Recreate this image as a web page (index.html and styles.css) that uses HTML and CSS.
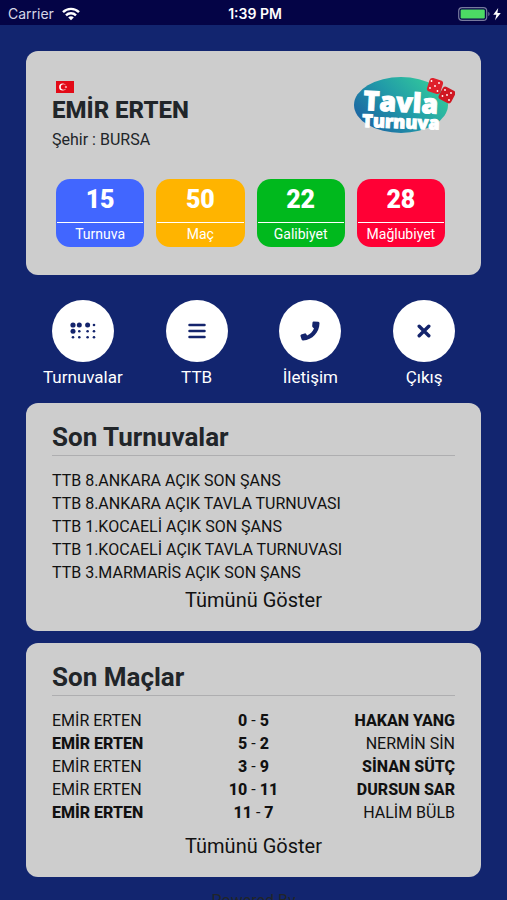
FILE: index.html
```html
<!DOCTYPE html>
<html lang="tr">
<head>
<meta charset="utf-8">
<meta name="viewport" content="width=device-width, initial-scale=1">
<title>Tavla Turnuva</title>
<link rel="stylesheet" href="styles.css">
</head>
<body>
<div class="app">
  <header class="status">
    <div class="status-left">
      <span>Carrier</span>
      <svg width="18" height="14" viewBox="0 0 18 14" fill="none" stroke="#fff" stroke-width="2.4" aria-hidden="true">
        <path d="M1 5.2C5.4 .7 12.6 .7 17 5.2"/>
        <path d="M4 8.3c2.8-2.8 7.2-2.8 10 0"/>
        <path d="M9 13.2 6.2 10.4c1.6-1.4 4-1.4 5.6 0z" fill="#fff" stroke="none"/>
      </svg>
    </div>
    <span class="status-time">1:39 PM</span>
    <div class="status-right">
      <svg width="44" height="14" viewBox="0 0 44 14" aria-hidden="true">
        <rect x=".7" y=".7" width="28" height="12.6" rx="3.4" fill="none" stroke="#777a9e" stroke-width="1.2"/>
        <rect x="2.6" y="2.6" width="24.200" height="8.8" rx="1.2" fill="#4cd964"/>
        <path d="M30.3 4.8c1.7.8 1.7 3.6 0 4.4z" fill="#777a9e"/>
        <path d="M40.2 1 35.2 7.8h3.2l-1.400 5.400 5.800-7.200h-3.400z" fill="#fff"/>
      </svg>
    </div>
  </header>

  <main class="content">
    <section class="card profile">
      <div class="profile-top">
        <div>
          <svg class="flag" width="18" height="12" viewBox="0 0 18 12" role="img" aria-label="Türkiye">
            <rect width="18" height="12" fill="#e30a17"/>
            <circle cx="6.6" cy="6" r="3.5" fill="#fff"/>
            <circle cx="7.6" cy="6" r="2.8" fill="#e30a17"/>
            <path d="m8.5 6 2.6-.9-1.6 2.2V4.700l1.600 2.200z" fill="#fff"/>
          </svg>
          <h1 class="name">EMİR ERTEN</h1>
          <p class="city">Şehir : BURSA</p>
        </div>
        <svg class="logo" width="104" height="60" viewBox="0 0 104 60" role="img" aria-label="Tavla Turnuva">
          <defs>
            <linearGradient id="oval" x1="0" y1=".8" x2="1" y2=".2">
              <stop offset="0" stop-color="#1b5fa2"/>
              <stop offset=".5" stop-color="#219ba8"/>
              <stop offset="1" stop-color="#35cf9a"/>
            </linearGradient>
          </defs>
          <ellipse cx="50" cy="29" rx="47" ry="28" fill="url(#oval)"/>
          <text class="logo-main" x="12" y="34" font-size="27" transform="rotate(3 12 34)">Tavla</text>
          <text class="logo-main" x="11" y="51" font-size="18" transform="rotate(2 11 51)">Turnuva</text>
          <g fill="#df202b">
            <rect x="77" y="3" width="14" height="14" rx="3" transform="rotate(18 84 10)"/>
            <rect x="89" y="12" width="14" height="14" rx="3" transform="rotate(28 96 19)" fill="#cf1722"/>
          </g>
          <g fill="#fff">
            <circle cx="80.500" cy="5" r=".9"/><circle cx="88" cy="7" r=".9"/><circle cx="84" cy="10" r=".9"/>
            <circle cx="79" cy="12" r=".9"/><circle cx="86.500" cy="15" r=".9"/>
            <circle cx="94" cy="14" r=".9"/><circle cx="100" cy="17" r=".9"/><circle cx="96" cy="19" r=".9"/>
            <circle cx="91.500" cy="20" r=".9"/><circle cx="98" cy="24" r=".9"/>
          </g>
        </svg>
      </div>
      <dl class="stats">
        <div class="stat stat-blue"><dt>Turnuva</dt><dd>15</dd></div>
        <div class="stat stat-amber"><dt>Maç</dt><dd>50</dd></div>
        <div class="stat stat-green"><dt>Galibiyet</dt><dd>22</dd></div>
        <div class="stat stat-red"><dt>Mağlubiyet</dt><dd>28</dd></div>
      </dl>
    </section>

    <nav class="menu">
      <a class="menu-item" href="#turnuvalar">
        <span class="menu-icon">
          <svg width="26" height="18" viewBox="0 0 26 18" fill="#14246c" aria-hidden="true">
            <circle cx="3" cy="3" r="2.600"/><circle cx="9.300" cy="3" r="2.500"/><circle cx="17.600" cy="3" r="2.500"/><circle cx="24" cy="3" r="1.300"/>
            <circle cx="3" cy="9.200" r="2.500"/><circle cx="9.300" cy="9.200" r="1.300"/><circle cx="17.600" cy="9.200" r="1.300"/><circle cx="24" cy="9.200" r="1.300"/>
            <circle cx="3" cy="15.300" r="1.300"/><circle cx="9.300" cy="15.300" r="1.300"/><circle cx="17.600" cy="15.300" r="1.300"/><circle cx="24" cy="15.300" r="1.300"/>
          </svg>
        </span>
        Turnuvalar
      </a>
      <a class="menu-item" href="#ttb">
        <span class="menu-icon">
          <svg width="18" height="16" viewBox="0 0 18 16" stroke="#14246c" stroke-width="2.500" stroke-linecap="round" aria-hidden="true">
            <path d="M1.500 2h15M1.500 8h15M1.500 14h15"/>
          </svg>
        </span>
        TTB
      </a>
      <a class="menu-item" href="#iletisim">
        <span class="menu-icon">
          <svg width="20" height="20" viewBox="0 0 20 20" fill="#14246c" aria-hidden="true">
            <path d="M13.600 .6 18.300 .8Q19.500 .9 19.500 2.200C19.400 11.400 12.400 18.800 3.200 19.400Q2 19.500 1.600 18.400L.5 15.100Q.2 14.100 1.200 13.600L4.600 12.400Q5.600 12.100 6.200 13L7.100 14.400C10.200 12.900 12.600 10.600 14 7.400L12.700 6.300Q12 5.700 12.200 4.800L12.500 1.500Q12.700 .6 13.600 .6z"/>
          </svg>
        </span>
        İletişim
      </a>
      <a class="menu-item" href="#cikis">
        <span class="menu-icon">
          <svg width="14" height="14" viewBox="0 0 14 14" stroke="#14246c" stroke-width="3.400" stroke-linecap="round" aria-hidden="true">
            <path d="M2.200 2.200l9.600 9.600M11.800 2.200l-9.600 9.600"/>
          </svg>
        </span>
        Çıkış
      </a>
    </nav>

    <section class="card panel">
      <h2 class="panel-title">Son Turnuvalar</h2>
      <ul class="events">
        <li>TTB 8.ANKARA AÇIK SON ŞANS</li>
        <li>TTB 8.ANKARA AÇIK TAVLA TURNUVASI</li>
        <li>TTB 1.KOCAELİ AÇIK SON ŞANS</li>
        <li>TTB 1.KOCAELİ AÇIK TAVLA TURNUVASI</li>
        <li>TTB 3.MARMARİS AÇIK SON ŞANS</li>
      </ul>
      <a class="more" href="#turnuvalar">Tümünü Göster</a>
    </section>

    <section class="card panel">
      <h2 class="panel-title">Son Maçlar</h2>
      <table class="matches">
        <tbody>
          <tr><td>EMİR ERTEN</td><td><b>0</b> - <b>5</b></td><td><b>HAKAN YANG</b></td></tr>
          <tr><td><b>EMİR ERTEN</b></td><td><b>5</b> - <b>2</b></td><td>NERMİN SİN</td></tr>
          <tr><td>EMİR ERTEN</td><td><b>3</b> - <b>9</b></td><td><b>SİNAN SÜTÇ</b></td></tr>
          <tr><td>EMİR ERTEN</td><td><b>10</b> - <b>11</b></td><td><b>DURSUN SAR</b></td></tr>
          <tr><td><b>EMİR ERTEN</b></td><td><b>11</b> - <b>7</b></td><td>HALİM BÜLB</td></tr>
        </tbody>
      </table>
      <a class="more more-spaced" href="#maclar">Tümünü Göster</a>
    </section>

    <footer class="credit">Powered By</footer>
  </main>
</div>
</body>
</html>
```
FILE: styles.css
```css
* {
  box-sizing: border-box;
}

body {
  margin: 0;
  background: #12256f;
  color: #111;
  font-family: Roboto, "Noto Sans", sans-serif;
  font-size: 16px;
  line-height: 23px;
}

h1, h2, p, ul, dl, dd {
  margin: 0;
}

a {
  color: inherit;
  text-decoration: none;
}

svg {
  display: block;
}

.app {
  display: flex;
  flex-direction: column;
  height: 100vh;
}

.status {
  display: grid;
  grid-template-columns: 1fr auto 1fr;
  align-items: center;
  flex: none;
  height: 25px;
  padding: 2px 5px 0 8px;
  background: #040446;
  color: #fff;
  font-family: Inter, sans-serif;
  font-size: 14px;
}

.status-left {
  display: flex;
  align-items: center;
  gap: 8px;
  color: #d6d7e6;
}

.status-time {
  font-weight: 600;
}

.status-right {
  justify-self: end;
}

.content {
  flex: 1;
  min-height: 0;
  padding: 26px 26px 0;
  overflow-y: auto;
  scrollbar-width: none;
}

.card {
  padding: 0 26px;
  border-radius: 12px;
  background: #cdcdcd;
}

.profile {
  padding-top: 25px;
  padding-bottom: 28px;
}

.profile-top {
  display: flex;
  justify-content: space-between;
  height: 103px;
}

.flag {
  margin: 5px 0 0 4px;
}

.name {
  margin-top: 3px;
  color: #212529;
  font-size: 24px;
  font-weight: 800;
  line-height: 28px;
}

.city {
  margin-top: 4px;
  color: #212529;
}

.logo-main {
  fill: #fff;
  stroke: #fff;
  stroke-width: 1;
  font-family: "Open Sans", sans-serif;
  font-weight: 800;
}

.stats {
  display: grid;
  grid-template-columns: repeat(4, 1fr);
  gap: 12px;
  padding: 0 10px 0 4px;
}

.stat {
  display: flex;
  flex-direction: column-reverse;
  border-radius: 14px;
  color: #fff;
  text-align: center;
}

.stat dt {
  margin: 0 1px;
  padding-bottom: 2px;
  border-top: 1px solid #fff;
  font-size: 14px;
  line-height: 22px;
}

.stat dd {
  padding-bottom: 2px;
  font-size: 25px;
  font-weight: 900;
  line-height: 41px;
}

.stat-blue { background: #4166ff; }
.stat-amber { background: #ffb400; }
.stat-green { background: #00b91d; }
.stat-red { background: #ff0035; }

.menu {
  display: grid;
  grid-template-columns: repeat(4, 1fr);
  padding: 25px 0 14px;
}

.menu-item {
  display: flex;
  flex-direction: column;
  align-items: center;
  gap: 4px;
  color: #fff;
  font-size: 17px;
}

.menu-icon {
  display: grid;
  place-items: center;
  width: 62px;
  height: 62px;
  border-radius: 50%;
  background: #fff;
}

.panel {
  padding-top: 20px;
  padding-bottom: 15px;
}

.panel + .panel {
  margin-top: 12px;
}

.panel-title {
  margin-bottom: 13px;
  padding-bottom: 4px;
  border-bottom: 1px solid #aeaeb0;
  color: #212529;
  font-size: 26px;
  font-weight: 700;
  line-height: 28px;
}

.events {
  padding: 0;
  list-style: none;
}

.matches {
  width: 100%;
  border-collapse: collapse;
  table-layout: fixed;
}

.matches td {
  padding: 0;
  text-align: center;
}

.matches td:first-child {
  text-align: left;
}

.matches td:last-child {
  text-align: right;
}

.matches b {
  font-weight: 800;
}

.more {
  display: block;
  font-size: 20px;
  line-height: 32px;
  text-align: center;
}

.more-spaced {
  margin-top: 6px;
}

.credit {
  padding-top: 12px;
  color: #212529;
  text-align: center;
}
```
